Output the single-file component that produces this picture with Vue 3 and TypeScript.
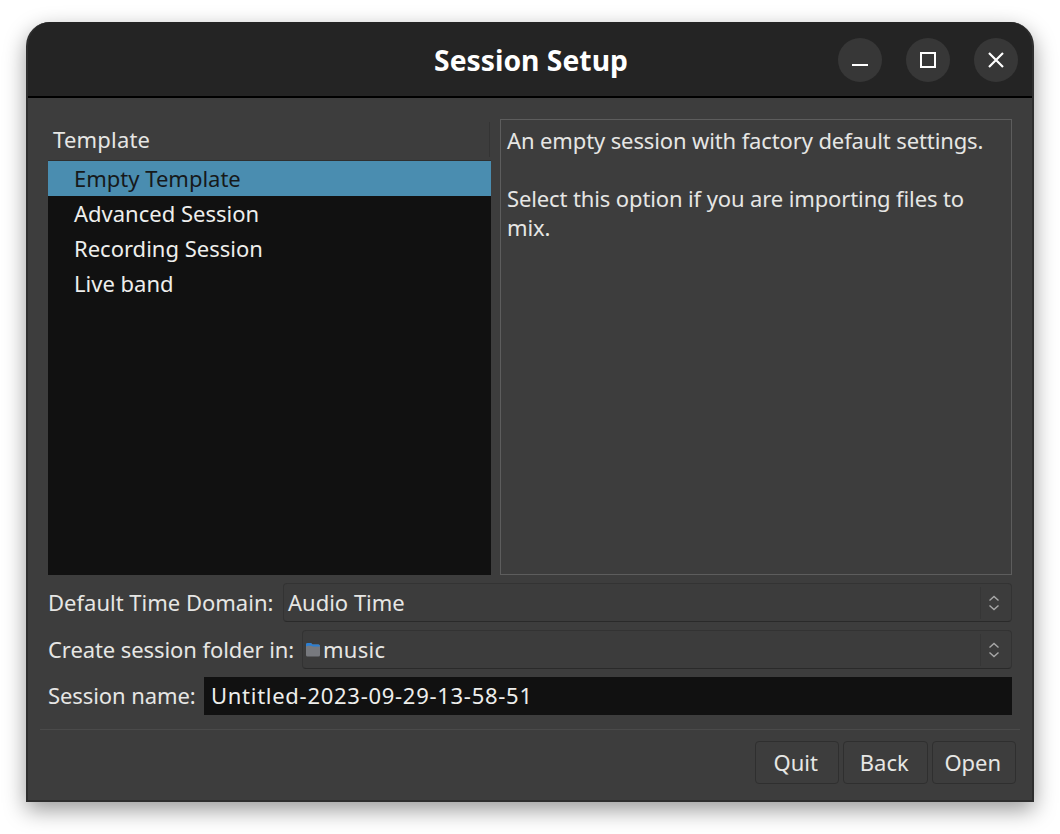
<script setup lang="ts">
const templates: string[] = ['Empty Template', 'Advanced Session', 'Recording Session', 'Live band']
const selected = 0
const combos = [
  { label: 'Default Time Domain:', value: 'Audio Time', folder: false, width: 235 },
  { label: 'Create session folder in:', value: 'music', folder: true, width: 254 },
]
const actions: string[] = ['Quit', 'Back', 'Open']
</script>

<template>
  <div class="page">
    <div class="window">
      <header class="titlebar">
        <h1 class="title">Session Setup</h1>
        <div class="controls">
          <button class="ctl" aria-label="Minimize">
            <svg width="16" height="16" viewBox="0 0 16 16"><path d="M0 13h16" stroke="#fff" stroke-width="2" fill="none" /></svg>
          </button>
          <button class="ctl" aria-label="Maximize">
            <svg width="16" height="16" viewBox="0 0 16 16"><rect x="1" y="1" width="14" height="14" stroke="#fff" stroke-width="2" fill="none" /></svg>
          </button>
          <button class="ctl" aria-label="Close">
            <svg width="16" height="16" viewBox="0 0 16 16"><path d="M1 1l14 14M15 1L1 15" stroke="#fff" stroke-width="2.2" fill="none" /></svg>
          </button>
        </div>
      </header>
      <main class="content">
        <div class="panes">
          <section class="left">
            <div class="col-head">
              <span class="col-name">Template</span>
              <span class="col-sep"></span>
            </div>
            <ul class="list">
              <li v-for="(t, i) in templates" :key="t" class="row" :class="{ selected: i === selected }">{{ t }}</li>
            </ul>
          </section>
          <section class="desc">
            <p>An empty session with factory default settings.</p>
            <p>Select this option if you are importing files to mix.</p>
          </section>
        </div>
        <div v-for="c in combos" :key="c.label" class="field">
          <label class="lbl" :class="{ tight: c.folder }" :style="{ width: c.width + 'px' }">{{ c.label }}</label>
          <div class="combo">
            <span class="combo-value" :class="{ spaced: c.folder }">
              <svg v-if="c.folder" class="folder" width="16" height="16" viewBox="0 0 16 16">
                <path d="M1 2.5Q1 1 2.5 1H6l1.5 1.5h6Q15 2.5 15 4v9q0 1.5-1.5 1.5h-11Q1 14.5 1 13z" fill="#77797e" />
                <path d="M1 4.4V2.5Q1 1 2.5 1H6l1.5 1.5h6Q15 2.5 15 4.4H8L6.5 3.8H3z" fill="#2a7fd4" />
              </svg>
              {{ c.value }}
            </span>
            <span class="arrows">
              <svg width="12" height="18" viewBox="0 0 12 18"><path d="M1.5 6.5L6 2.5l4.5 4M1.5 11.5l4.5 4 4.5-4" stroke="#a8a8a8" stroke-width="1.4" fill="none" /></svg>
            </span>
          </div>
        </div>
        <div class="field last">
          <label class="lbl tight" :style="{ width: '156px' }">Session name:</label>
          <div class="entry">Untitled-2023-09-29-13-58-51</div>
        </div>
      </main>
      <footer class="actions">
        <button v-for="a in actions" :key="a" class="btn">{{ a }}</button>
      </footer>
    </div>
  </div>
</template>

<style>
html, body { margin: 0; background: #fff; }
</style>

<style scoped>
.page {
  width: 1060px;
  height: 834px;
  box-sizing: border-box;
  padding: 22px 26px 32px;
  background: #fff;
  overflow: hidden;
  font-family: "Noto Sans", sans-serif;
  font-size: 22px;
  color: #e6e6e4;
}
.window {
  height: 780px;
  box-sizing: border-box;
  display: flex;
  flex-direction: column;
  background: #3d3d3d;
  border-radius: 24px 24px 0 0;
  border: 2px solid #2e2e2e;
  border-top: 0;
  box-shadow: 0 8px 22px rgba(0, 0, 0, 0.4);
  overflow: hidden;
}
.titlebar {
  height: 76px;
  flex: none;
  box-sizing: border-box;
  padding: 2px 0 0 2px;
  position: relative;
  display: flex;
  align-items: center;
  justify-content: center;
  background: #242424;
  border-bottom: 2px solid #000;
}
.title {
  margin: 0;
  font-size: 28.3px;
  font-weight: 700;
  color: #fff;
  line-height: 1;
}
.controls {
  position: absolute;
  right: 14px;
  top: 16px;
  display: flex;
  gap: 24px;
}
.ctl {
  width: 44px;
  height: 44px;
  padding: 0;
  border: 0;
  border-radius: 50%;
  background: #373737;
  display: flex;
  align-items: center;
  justify-content: center;
}
.content {
  flex: none;
  display: flex;
  flex-direction: column;
  padding: 21px 20px 0;
}
.panes {
  display: flex;
  gap: 9px;
  height: 456px;
  margin-bottom: 8px;
}
.left {
  width: 443px;
  flex: none;
  display: flex;
  flex-direction: column;
}
.col-head {
  height: 42px;
  flex: none;
  box-sizing: border-box;
  display: flex;
  align-items: center;
  justify-content: space-between;
  padding: 0 1px 0 5px;
  border-bottom: 1px solid #2f2f2f;
}
.col-name {
  line-height: 38px;
  margin-bottom: 2px;
  letter-spacing: 0.2px;
}
.col-sep {
  width: 1px;
  height: 35px;
  background: #343434;
}
.list {
  flex: 1;
  margin: 0;
  padding: 0;
  list-style: none;
  background: #111;
}
.row {
  height: 35px;
  line-height: 35px;
  padding-left: 26px;
  color: #eeeeec;
}
.row.selected {
  background: #4a8db0;
  color: #16191b;
}
.desc {
  flex: 1;
  box-sizing: border-box;
  border: 1px solid #5d5d5d;
  padding: 6px 6px;
  line-height: 29px;
  letter-spacing: -0.12px;
}
.desc p { margin: 0 0 29px; }
.field {
  display: flex;
  align-items: center;
  height: 39px;
  margin-bottom: 8px;
}
.field.last { height: 38px; }
.lbl {
  flex: none;
  white-space: nowrap;
  padding-bottom: 2px;
  box-sizing: border-box;
}
.lbl.tight { letter-spacing: -0.08px; }
.combo {
  flex: 1;
  height: 39px;
  box-sizing: border-box;
  display: flex;
  align-items: center;
  justify-content: space-between;
  background: #3c3c3c;
  border: 1px solid #333;
  border-bottom-color: #2a2a2a;
  border-radius: 4px;
}
.combo-value {
  display: flex;
  align-items: center;
  padding: 0 0 2px 4px;
}
.combo-value.spaced { letter-spacing: 0.3px; }
.folder { margin: 2px 2px 0 -2px; }
.arrows {
  width: 31px;
  height: 32px;
  box-sizing: border-box;
  padding-right: 4px;
  border-left: 1px solid #363636;
  display: flex;
  align-items: center;
  justify-content: center;
}
.entry {
  flex: 1;
  height: 38px;
  line-height: 37px;
  padding-left: 7px;
  background: #111;
  color: #eeeeec;
  letter-spacing: 0.72px;
}
.actions {
  margin: 6px 12px 0;
  padding: 11px 4px 0 0;
  border-top: 1px solid #4a4a4a;
  display: flex;
  justify-content: flex-end;
  gap: 4px;
}
.btn {
  width: 84.5px;
  height: 43px;
  padding: 0 2px 2px 0;
  font: inherit;
  color: #e6e6e4;
  background: #3d3d3d;
  border: 1px solid #2f2f2f;
  border-radius: 4px;
}
</style>
